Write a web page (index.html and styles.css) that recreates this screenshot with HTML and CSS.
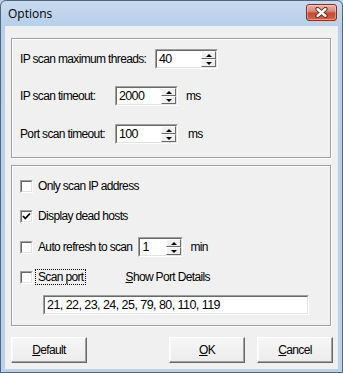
FILE: index.html
```html
<!DOCTYPE html>
<html>
<head>
<meta charset="utf-8">
<link rel="stylesheet" href="styles.css">
</head>
<body>
<div class="window">
  <div class="titlebar">
    <span class="title">Options</span>
    <div class="close">
      <svg width="13" height="11" viewBox="0 0 13 11">
        <path d="M2.5 2 L10.5 9 M10.5 2 L2.5 9" stroke="#5a2018" stroke-width="4.2" stroke-linecap="round" fill="none"/>
        <path d="M2.5 2 L10.5 9 M10.5 2 L2.5 9" stroke="#ffffff" stroke-width="2.4" stroke-linecap="round" fill="none"/>
      </svg>
    </div>
  </div>
  <div class="client">
    <div class="group g1">
      <div class="row">
        <span class="lbl lbl-wide">IP scan maximum threads:</span>
        <div class="spin spin-w"><span class="val">40</span><div class="arrows"><div class="ab up"><i></i></div><div class="ab down"><i></i></div></div></div>
      </div>
      <div class="row r2">
        <span class="lbl lbl-short">IP scan timeout:</span>
        <div class="spin spin-w"><span class="val">2000</span><div class="arrows"><div class="ab up"><i></i></div><div class="ab down"><i></i></div></div></div>
        <span class="unit">ms</span>
      </div>
      <div class="row r3">
        <span class="lbl lbl-short">Port scan timeout:</span>
        <div class="spin spin-w"><span class="val">100</span><div class="arrows"><div class="ab up"><i></i></div><div class="ab down"><i></i></div></div></div>
        <span class="unit unit3">ms</span>
      </div>
    </div>
    <div class="group g2">
      <div class="crow c1"><span class="cb"></span><span class="ctext">Only scan IP address</span></div>
      <div class="crow c2"><span class="cb"><svg width="9" height="9" viewBox="0 0 9 9"><path d="M1 4 L3.3 6.5 L8 1.5" stroke="#000" stroke-width="1.8" fill="none"/></svg></span><span class="ctext">Display dead hosts</span></div>
      <div class="crow c3"><span class="cb"></span><span class="ctext">Auto refresh to scan</span>
        <div class="spin spin-s"><span class="val">1</span><div class="arrows"><div class="ab up"><i></i></div><div class="ab down"><i></i></div></div></div>
        <span class="unit umin">min</span>
      </div>
      <div class="crow c4"><span class="cb"></span><span class="ctext focus">Scan port</span><span class="details"><u>S</u>how Port Details</span></div>
      <div class="portbox">21, 22, 23, 24, 25, 79, 80, 110, 119</div>
    </div>
    <div class="buttons">
      <div class="btn"><u>D</u>efault</div>
      <div class="spacer"></div>
      <div class="btn"><u>O</u>K</div>
      <div class="btn"><u>C</u>ancel</div>
    </div>
  </div>
</div>
</body>
</html>
```
FILE: styles.css
```css
html, body {
  margin: 0;
  padding: 0;
  background: #b9d1ea;
}
.window {
  width: 343px;
  height: 373px;
  box-sizing: border-box;
  border: 1px solid #52677f;
  border-radius: 6px 6px 0 0;
  background: linear-gradient(to bottom, #c8daee 0px, #b7cfea 26px, #b9d1ea 100%);
  padding: 0 4px 3px 4px;
  display: flex;
  flex-direction: column;
  font-family: "Liberation Sans", Arial, sans-serif;
  font-size: 12px;
  letter-spacing: -0.65px;
  color: #000;
}
.titlebar {
  height: 25px;
  display: flex;
  align-items: flex-start;
  letter-spacing: 0;
}
.title {
  font-family: "Open Sans", "Noto Sans", sans-serif;
  font-size: 12px;
  padding-left: 3px;
  margin-top: 5px;
  line-height: 16px;
  color: #000;
}
.close {
  margin-left: auto;
  margin-right: 1px;
  margin-top: 3px;
  width: 31px;
  height: 17px;
  box-sizing: border-box;
  border: 1px solid #7a3326;
  border-radius: 3px;
  background: linear-gradient(to bottom, #eab1a4 0%, #de8a78 40%, #c9492f 55%, #d0654e 100%);
  box-shadow: inset 0 0 0 1px rgba(255,255,255,0.35);
  display: flex;
  align-items: center;
  justify-content: center;
}
.client {
  flex: 1;
  background: #f0f0f0;
  padding: 12px 5px 6px 6px;
  display: flex;
  flex-direction: column;
}
.group {
  width: 320px;
  box-sizing: border-box;
  border: 1px solid #a0a0a0;
  box-shadow: inset 1px 1px 0 #ffffff, 1px 1px 0 #ffffff;
  display: flex;
  flex-direction: column;
}
.g1 {
  height: 120px;
  padding: 10px 0 0 8px;
}
.g2 {
  height: 161px;
  margin-top: 7px;
  padding: 10px 0 0 8px;
}
.row {
  height: 20px;
  display: flex;
  align-items: center;
}
.r2 { margin-top: 17px; }
.r3 { margin-top: 18px; }
.lbl { white-space: nowrap; }
.lbl-wide { width: 135px; }
.lbl-short { width: 95px; }
.unit { margin-left: 8px; }
.unit3 { margin-left: 10px; }
.umin { margin-left: 7px; }

.spin {
  height: 20px;
  box-sizing: border-box;
  border-style: solid;
  border-width: 1px;
  border-color: #a0a0a0 #ffffff #ffffff #a0a0a0;
  background: #fff;
  display: flex;
  position: relative;
}
.spin::before {
  content: "";
  position: absolute;
  left: 0; top: 0; right: 0; bottom: 0;
  border-style: solid;
  border-width: 1px;
  border-color: #696969 #e3e3e3 #e3e3e3 #696969;
  pointer-events: none;
}
.spin-w { width: 63px; }
.spin-s { width: 45px; margin-left: 6px; }
.val {
  flex: 1;
  padding-left: 3px;
  padding-top: 1px;
  line-height: 16px;
  font-size: 12.5px;
}
.arrows {
  width: 15px;
  margin: 1px 1px 1px 0;
  display: flex;
  flex-direction: column;
}
.ab {
  flex: 1;
  box-sizing: border-box;
  background: #f0f0f0;
  border-style: solid;
  border-width: 1px;
  border-color: #ffffff #696969 #696969 #ffffff;
  display: flex;
  align-items: center;
  justify-content: center;
}
.ab i {
  display: block;
  width: 0;
  height: 0;
  border-left: 3px solid transparent;
  border-right: 3px solid transparent;
}
.up i { border-bottom: 3px solid #000; }
.down i { border-top: 3px solid #000; }

.crow {
  height: 20px;
  display: flex;
  align-items: center;
}
.c2 { margin-top: 10px; }
.c3 { margin-top: 11px; }
.c4 { margin-top: 10px; }
.cb {
  width: 13px;
  height: 13px;
  box-sizing: border-box;
  border-style: solid;
  border-width: 1px;
  border-color: #a0a0a0 #ffffff #ffffff #a0a0a0;
  background: #fff;
  position: relative;
  display: flex;
  align-items: center;
  justify-content: center;
}
.cb::before {
  content: "";
  position: absolute;
  left: 0; top: 0; right: 0; bottom: 0;
  border-style: solid;
  border-width: 1px;
  border-color: #696969 #e3e3e3 #e3e3e3 #696969;
}
.cb svg { position: relative; }
.ctext {
  margin-left: 5px;
  white-space: nowrap;
}
.focus {
  margin-left: 3px;
  padding: 0 1px 0 2px;
  outline: 1px dotted #000;
  outline-offset: 0;
  line-height: 14px;
}
.details {
  margin-left: 41px;
  white-space: nowrap;
}
.portbox {
  margin-top: 8px;
  margin-left: 23px;
  width: 266px;
  height: 20px;
  box-sizing: border-box;
  border-style: solid;
  border-width: 1px;
  border-color: #a0a0a0 #ffffff #ffffff #a0a0a0;
  background: #fff;
  position: relative;
  padding-left: 3px;
  line-height: 18px;
  font-size: 12.5px;
  letter-spacing: -0.55px;
  white-space: nowrap;
}
.portbox::before {
  content: "";
  position: absolute;
  left: 0; top: 0; right: 0; bottom: 0;
  border-style: solid;
  border-width: 1px;
  border-color: #696969 #e3e3e3 #e3e3e3 #696969;
}
.buttons {
  margin-top: 11px;
  height: 26px;
  display: flex;
  gap: 12px;
}
.spacer { flex: 1; }
.btn {
  width: 76px;
  height: 26px;
  box-sizing: border-box;
  border-style: solid;
  border-width: 1px;
  border-color: #ffffff #696969 #696969 #ffffff;
  background: linear-gradient(to bottom, #f6f6f6, #ececec);
  box-shadow: inset -1px -1px 0 #a0a0a0, inset 1px 1px 0 #f8f8f8;
  display: flex;
  align-items: center;
  justify-content: center;
  white-space: nowrap;
}
```
